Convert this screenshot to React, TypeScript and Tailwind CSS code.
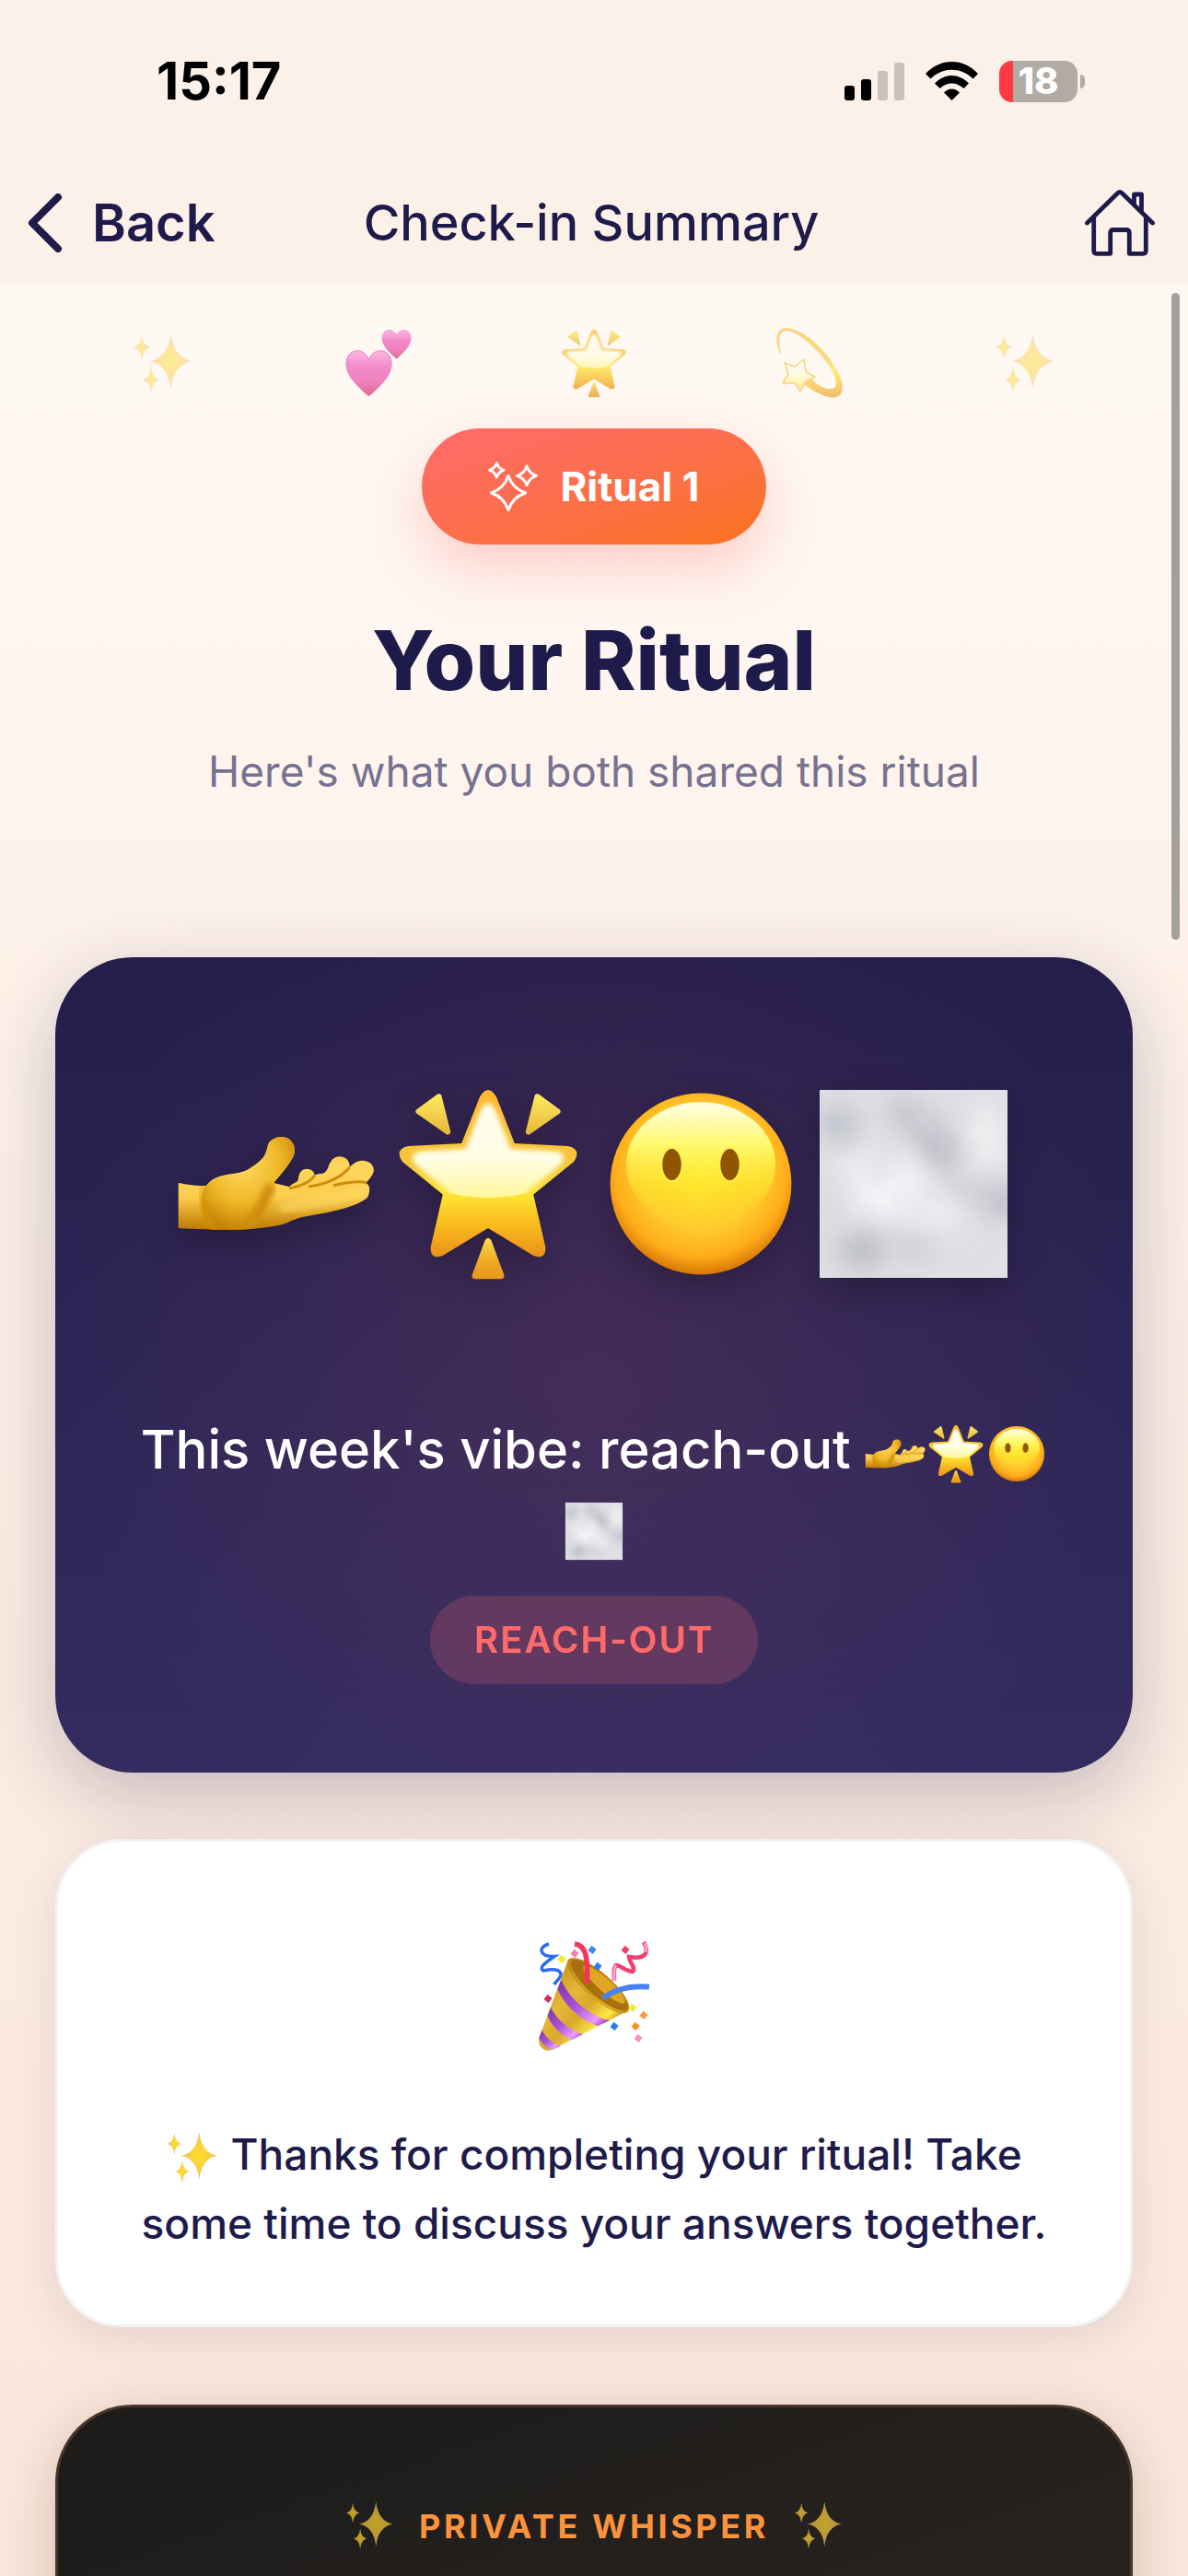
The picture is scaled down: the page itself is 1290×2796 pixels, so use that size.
import type { ReactNode } from 'react'

interface IconProps {
  className?: string
}

function star4(cx: number, cy: number, rx: number, ry: number, k = 0.12) {
  const ix = rx * k
  const iy = ry * k
  return `M${cx} ${cy - ry}Q${cx + ix} ${cy - iy} ${cx + rx} ${cy}Q${cx + ix} ${cy + iy} ${cx} ${cy + ry}Q${cx - ix} ${cy + iy} ${cx - rx} ${cy}Q${cx - ix} ${cy - iy} ${cx} ${cy - ry}Z`
}

const STAR =
  'M33 4.5Q36 -.5 39 4.5L45.6 21.3L65 22.3Q70 23.5 67 28L52.4 39.8L56.8 59Q57 63.5 52.5 62L36 52L19.5 62Q15 63.5 15.2 59L19.6 39.8L5 28Q2 23.5 7 22.3L26.4 21.3Z'

const HEART = 'M25.5 72C14 62 1 50 1 37C1 20 20 18 25.5 32C31 18 50 20 50 37C50 50 37 62 25.5 72Z'

const HAND =
  'M.9 35.6C5 36.5 8 36.7 10.9 36.7C13 34 15 33.5 17.6 32.8C21 32 23.5 32.3 25.9 30.9C29 29 31 27.5 32 25.9C33.5 23 33 21 34.5 20.3C36.5 18.4 40.5 18.6 42 20.8C43.6 23 43 25.5 42 27C40 30.5 37.5 33 35.4 35.7L41 37C43 35.2 44 35.8 44.3 34.2C44.6 31.5 46 30.6 47.3 30.6C49 30.6 50.2 31.6 50.2 32.9C51.5 32.2 52.8 32.5 53.7 32C55.2 31 55 29.5 56 28.1C57 26.5 58 26.1 59.3 26.1C61.5 26.2 63 27.6 62.9 30C64.5 28.4 65.8 27.6 67.6 27.6C70 27.7 71.8 29.2 71.6 31.4C71.2 33.2 69.6 34.6 68.9 35.7C70 36.5 70.2 37.4 70 38.8C69.8 40.2 69.4 41 68.7 41.4C66 43.2 64 44 61 44.8C55 46.6 50 47 45.4 48.1C42 49 40.5 50.3 37.6 50.9C32 52 26 52.6 20.4 52.6C13 52.6 7 52.4 .9 52Z'

// gradients shared by all the emoji drawings
function EmojiDefs() {
  return (
    <svg className="absolute h-0 w-0" aria-hidden="true">
      <defs>
        <linearGradient id="gold" x1="0" y1="0" x2="0" y2="1">
          <stop offset="0" stopColor="#ffb92e" />
          <stop offset="0.45" stopColor="#f5c63c" />
          <stop offset="0.62" stopColor="#fde736" />
          <stop offset="0.82" stopColor="#f8b81c" />
          <stop offset="1" stopColor="#e8921a" />
        </linearGradient>
        <linearGradient id="shine" x1="0" y1="0" x2="0" y2="1">
          <stop offset="0" stopColor="#fffdf0" />
          <stop offset="0.4" stopColor="#fffde2" />
          <stop offset="0.72" stopColor="#fff68e" />
          <stop offset="1" stopColor="#ffd728" />
        </linearGradient>
        <linearGradient id="ray" x1="0" y1="0" x2="0" y2="1">
          <stop offset="0" stopColor="#fbe85e" />
          <stop offset="1" stopColor="#e9b93a" />
        </linearGradient>
        <linearGradient id="tail" x1="0" y1="0" x2="0" y2="1">
          <stop offset="0" stopColor="#fce04e" />
          <stop offset="0.6" stopColor="#efa522" />
          <stop offset="1" stopColor="#e8981c" />
        </linearGradient>
        <radialGradient id="face" cx="0.5" cy="0.42" r="0.6">
          <stop offset="0" stopColor="#ffe82e" />
          <stop offset="0.55" stopColor="#ffcb2e" />
          <stop offset="0.8" stopColor="#ffad1a" />
          <stop offset="1" stopColor="#cf6a00" />
        </radialGradient>
        <linearGradient id="faceShine" x1="0" y1="0" x2="0" y2="1">
          <stop offset="0" stopColor="#fffde6" />
          <stop offset="0.35" stopColor="#fff86a" />
          <stop offset="0.7" stopColor="#ffe92a" stopOpacity="0.5" />
          <stop offset="1" stopColor="#ffd92a" stopOpacity="0" />
        </linearGradient>
        <linearGradient id="skin" x1="0" y1="0" x2="0" y2="1">
          <stop offset="0" stopColor="#efb11e" />
          <stop offset="0.3" stopColor="#ffd75e" />
          <stop offset="0.65" stopColor="#fbcd4c" />
          <stop offset="1" stopColor="#bd7800" />
        </linearGradient>
        <radialGradient id="palm" cx="0.45" cy="0.3" r="0.7">
          <stop offset="0" stopColor="#ffd862" />
          <stop offset="0.55" stopColor="#efb828" />
          <stop offset="1" stopColor="#c07c00" />
        </radialGradient>
        <linearGradient id="heart" x1="0" y1="0" x2="0" y2="1">
          <stop offset="0" stopColor="#f9b9e0" />
          <stop offset="0.35" stopColor="#f38bcb" />
          <stop offset="0.7" stopColor="#f07fbb" />
          <stop offset="1" stopColor="#d96a94" />
        </linearGradient>
        <radialGradient id="sparkle">
          <stop offset="0" stopColor="#ffe02a" />
          <stop offset="0.45" stopColor="#fbd03c" />
          <stop offset="1" stopColor="#f8b878" />
        </radialGradient>
        <linearGradient id="cone" x1="0" y1="0.35" x2="0.65" y2="1">
          <stop offset="0" stopColor="#c9961c" />
          <stop offset="0.3" stopColor="#e5b83a" />
          <stop offset="0.55" stopColor="#d9a82a" />
          <stop offset="0.8" stopColor="#ffe744" />
          <stop offset="1" stopColor="#a87410" />
        </linearGradient>
        <linearGradient id="stripe" x1="0" y1="0" x2="1" y2="1">
          <stop offset="0" stopColor="#7d34a8" />
          <stop offset="0.45" stopColor="#a651d6" />
          <stop offset="0.8" stopColor="#ee9bff" />
          <stop offset="1" stopColor="#6d1f86" />
        </linearGradient>
        <filter id="fogBlur" x="-50%" y="-50%" width="200%" height="200%">
          <feGaussianBlur stdDeviation="4.5" />
        </filter>
        <filter id="fogNoise" x="0" y="0" width="100%" height="100%">
          <feTurbulence type="fractalNoise" baseFrequency=".045" numOctaves="4" seed="7" />
          <feColorMatrix values="0 0 0 0 .7  0 0 0 0 .7  0 0 0 0 .75  2.4 0 0 0 -.95" />
        </filter>
        <filter id="soft" x="-20%" y="-20%" width="140%" height="140%">
          <feGaussianBlur stdDeviation="1" />
        </filter>
        <clipPath id="fogClip">
          <rect x="2" y="2" width="68" height="68" />
        </clipPath>
        <clipPath id="shineClip">
          <ellipse cx="36" cy="10" rx="42" ry="31" />
        </clipPath>
        <clipPath id="handClip">
          <path d={HAND} />
        </clipPath>
      </defs>
    </svg>
  )
}

function Sparkles({ className }: IconProps) {
  return (
    <svg viewBox="0 0 64 63" className={className} role="img" aria-label="sparkles">
      <g fill="url(#sparkle)">
        <path d={star4(40.5, 29, 23, 31)} />
        <path d={star4(9, 14, 9, 14)} />
        <path d={star4(19, 49, 9, 14)} />
      </g>
    </svg>
  )
}

function Hearts({ className }: IconProps) {
  return (
    <svg viewBox="0 0 72 72" className={className} role="img" aria-label="two hearts">
      <g fill="url(#heart)" stroke="#ee7cc0" strokeWidth="1">
        <path d={HEART} />
        <path d={HEART} transform="translate(39.5 -14) scale(.63)" />
      </g>
    </svg>
  )
}

function GlowingStar({ className }: IconProps) {
  return (
    <svg viewBox="0 0 72 72" className={className} role="img" aria-label="glowing star">
      <path d={STAR} fill="url(#gold)" />
      <g clipPath="url(#shineClip)">
        <path d={STAR} fill="url(#shine)" filter="url(#soft)" transform="translate(5.4 5.2) scale(.85)" />
      </g>
      <g fill="url(#ray)" stroke="url(#ray)" strokeWidth="2" strokeLinejoin="round">
        <path d="M18.2 4.4L10.8 9.8L21.4 17.2Z" />
        <path d="M53.8 4.4L61.2 9.8L50.6 17.2Z" />
      </g>
      <path d="M34.8 56.6Q36 54.6 37.2 56.6L41.8 69Q42 70.3 40.8 70.4L31.2 70.4Q30 70.3 30.2 69Z" fill="url(#tail)" />
    </svg>
  )
}

function Dizzy({ className }: IconProps) {
  return (
    <svg viewBox="0 0 74 76" className={className} role="img" aria-label="dizzy">
      <path
        d="M5 28C-2 12 1 0 12 0C30 1 54 22 67 46C79 68 71 78 58 75C46 72 34 64 30 60L37 53C45 62 56 69 64 65C70 58 60 42 50 30C36 14 20 2 11 3C3 4 3 14 6 28Z"
        fill="url(#gold)"
      />
      <path
        d="M31 34L33 47L43 53L33 58L27 69L21 60L8 60L14 50L10 38L21 42Z"
        fill="url(#shine)"
        stroke="#f0b93c"
        strokeWidth="1.5"
        strokeLinejoin="round"
      />
    </svg>
  )
}

function Hand({ className }: IconProps) {
  return (
    <svg viewBox="0 0 72 72" className={className} role="img" aria-label="palm up hand">
      <path d={HAND} fill="url(#skin)" />
      <g clipPath="url(#handClip)">
        <path
          d="M10.9 36.7C14 33 21 33 25.9 30.9C33 26 32 18 38.5 18.5C44 19 44 24 42 27.5C38 33 35 36 33.5 41C32 46 29 50 27 54L14 54C8 48 8.5 40 10.9 36.7Z"
          fill="url(#palm)"
        />
        <path d="M34.5 36.5C32 42 30 47 26 51" fill="none" stroke="#cf8f08" strokeWidth="4" filter="url(#soft)" />
        <path d="M10.5 36.5C8.5 41 9.5 48 14 52" fill="none" stroke="#d79a10" strokeWidth="1.6" filter="url(#soft)" />
        <path
          d="M41 37.6C46 36.6 49 35 50.2 32.9M48 37C55 36 60 33.5 62.9 30M57 36.6C62 35.4 66 34.8 69 35.6"
          fill="none"
          stroke="#cf8c0a"
          strokeWidth="1"
        />
        <path d="M38 45C48 43 60 42 69 38" fill="none" stroke="#ffda68" strokeWidth="4" opacity=".6" filter="url(#soft)" />
      </g>
    </svg>
  )
}

function NoMouthFace({ className }: IconProps) {
  return (
    <svg viewBox="0 0 72 72" className={className} role="img" aria-label="face without mouth">
      <circle cx="36" cy="36" r="32.8" fill="url(#face)" />
      <ellipse cx="36" cy="29" rx="27" ry="22.6" fill="url(#faceShine)" />
      <g fill="#8f5500" stroke="#ffef4a" strokeWidth=".6">
        <ellipse cx="25.5" cy="29" rx="3.7" ry="6" />
        <ellipse cx="46.5" cy="29" rx="3.7" ry="6" />
      </g>
    </svg>
  )
}

function Fog({ className }: IconProps) {
  return (
    <svg viewBox="0 0 72 72" className={className} role="img" aria-label="fog">
      <g clipPath="url(#fogClip)">
        <rect x="2" y="2" width="68" height="68" fill="#e0e1e5" />
        <g filter="url(#fogBlur)">
          <ellipse cx="9" cy="14" rx="8" ry="7" fill="#c0c2ca" />
          <ellipse cx="38" cy="14" rx="14" ry="6" fill="#bebfc8" transform="rotate(32 38 14)" />
          <ellipse cx="47" cy="24" rx="7" ry="6" fill="#b6b7c1" />
          <ellipse cx="66" cy="42" rx="8" ry="7" fill="#bdbec7" />
          <ellipse cx="55" cy="38" rx="9" ry="5" fill="#cdced5" />
          <ellipse cx="17" cy="60" rx="10" ry="8" fill="#c0c1c9" />
          <ellipse cx="37" cy="58" rx="7" ry="8" fill="#ced0d6" />
          <ellipse cx="24" cy="37" rx="16" ry="10" fill="#f8f8fa" />
          <ellipse cx="62" cy="20" rx="8" ry="12" fill="#f0f0f2" />
          <ellipse cx="44" cy="47" rx="12" ry="7" fill="#eeeef1" />
          <ellipse cx="6" cy="42" rx="5" ry="8" fill="#d8d9de" />
        </g>
        <rect x="2" y="2" width="68" height="68" filter="url(#fogNoise)" opacity=".55" />
      </g>
    </svg>
  )
}

const confetti = [
  { x: 25, y: 19, fill: '#f7ea2c' },
  { x: 39, y: 13, fill: '#f57fae' },
  { x: 58, y: 9, fill: '#3b86f2' },
  { x: 64, y: 27, fill: '#2f7df0' },
  { x: 94, y: 9, fill: '#ee3f6b' },
  { x: 10, y: 62, fill: '#cf2f55' },
  { x: 102, y: 72, fill: '#f3ea35' },
  { x: 114, y: 80, fill: '#fb9a3a' },
  { x: 105, y: 92, fill: '#f98f25' },
  { x: 82, y: 92, fill: '#2f7df0' },
  { x: 108, y: 105, fill: '#f990c3' },
]

function PartyPopper({ className }: IconProps) {
  return (
    <svg viewBox="0 0 120 120" className={className} role="img" aria-label="party popper">
      <path d="M32 20L0 106C-1 114 6 121 14 118L96 76Z" fill="url(#cone)" />
      <g fill="url(#stripe)">
        <path d="M24.3 42C32 60 52 80 77 86L64 92C46 86 28 70 20.5 52Z" />
        <path d="M13 72C20 86 34 97 48 101L36 107C24 102 14 92 9.5 81Z" />
        <path d="M3.5 96.5C8 105 15 111 24 113.5L15 118C9 116 3 111 .3 105Z" />
      </g>
      <ellipse cx="64.6" cy="48" rx="43" ry="14" transform="rotate(41 64.6 48)" fill="#c68d14" />
      <ellipse cx="65.5" cy="47.5" rx="40" ry="11.5" transform="rotate(41 65.5 47.5)" fill="#a8700c" />
      <ellipse cx="71" cy="47" rx="30" ry="7" transform="rotate(42 71 47)" fill="#e0a523" />
      <path d="M34 22C36 40 62 70 94 77C72 76 36 46 34 22Z" fill="#f0c13a" />
      <g fill="none">
        <path d="M11 3C-1 6 0 17 17 16.5C6 24 0 29 5 32C14 30 22 30 24 35C25 39 20 42 16.7 47" stroke="#2b6cf0" strokeWidth="3.5" />
        <path d="M39 3C52 4 53.5 20 52.5 46" stroke="#f5335f" strokeWidth="5.5" />
        <path d="M114 1C120 12 117 20 98 17C98 23 106 28 102 33C96 33 88 26 84 26C81 28 82 36 82 43" stroke="#f0406f" strokeWidth="4.5" />
        <path d="M82 43C82 36 81 28 84 26M115 2C117 6 117 9 117 12" stroke="#ff9fd0" strokeWidth="3" />
        <path d="M70 62C82 52 100 48 120 49.5" stroke="#4583f5" strokeWidth="6" />
      </g>
      {confetti.map((c) => (
        <rect
          key={`${c.x}-${c.y}`}
          x={c.x - 3}
          y={c.y - 3}
          width="6.5"
          height="6.5"
          fill={c.fill}
          transform={`rotate(38 ${c.x} ${c.y})`}
        />
      ))}
    </svg>
  )
}

function StatusBar() {
  return (
    <div className="flex items-center justify-between pt-[60px] pr-[112px] pl-[170px] text-black">
      <span className="text-[56px] leading-[56px] font-bold">15:17</span>
      <div className="flex items-center">
        <svg viewBox="0 0 65 41" className="h-[41px] w-[65px]" aria-label="signal">
          <rect x="0" y="25" width="11" height="16" rx="3" />
          <rect x="18" y="18" width="11" height="23" rx="3" />
          <rect x="36" y="9" width="11" height="32" rx="3" fill="#cbc1ba" />
          <rect x="54" y="0" width="11" height="41" rx="3" fill="#cbc1ba" />
        </svg>
        <svg viewBox="0 0 57 42" className="ml-[23px] h-[42px] w-[57px]" aria-label="wifi">
          <path d="M0 13C16 -4.3 41 -4.3 57 13L51.5 18.5C38.500 5.5 18.5 5.5 5.5 18.5Z" />
          <path d="M10 23.500C21 12 36 12 47 23.5L41.5 29C34 21.5 23 21.5 15.5 29Z" />
          <path d="M20 33.5C25 28 32 28 37 33.5L28.5 42Z" />
        </svg>
        <div className="ml-[23px] flex h-[45px] w-[85px] items-center justify-center rounded-[14px] bg-linear-to-r from-[#ff3b41] from-[15px] to-[#b2aaa4] to-[15px] text-[40px] leading-[48px] font-extrabold text-white">
          18
        </div>
        <div className="ml-[3px] h-[15px] w-[5px] rounded-r-full bg-[#b2aaa4]" />
      </div>
    </div>
  )
}

function Header() {
  return (
    <header className="grid grid-cols-[1fr_auto_1fr] items-center pt-[90px] pr-9 pb-[31px] pl-[30px] text-[#1e1b4b]">
      <button className="flex items-center gap-8 text-[56px] leading-[72px] font-semibold">
        <svg viewBox="0 0 38 64" className="h-16 w-[38px]" fill="none" stroke="currentColor" strokeWidth="8" strokeLinecap="round" strokeLinejoin="round">
          <path d="M33 4L5 32L33 60" />
        </svg>
        Back
      </button>
      <h1 className="text-[54px] leading-[72px] font-medium">Check-in Summary</h1>
      <button className="justify-self-end" aria-label="Home">
        <svg viewBox="0 0 76 72" className="h-[72px] w-[76px]" fill="none" stroke="currentColor" strokeWidth="4.8" strokeLinecap="round" strokeLinejoin="round">
          <path d="M2.5 36L35.5 3.7Q38 1.5 40.5 3.7L73.5 36" />
          <path d="M9.7 30V66Q9.7 69.3 13 69.3H27.7V47Q27.7 43.5 31.2 43.5H44.8Q48.3 43.5 48.3 47V69.3H63Q66.3 69.3 66.3 66V30" />
          <path d="M53.5 14V5H61.5V23" />
        </svg>
      </button>
    </header>
  )
}

function Hero() {
  return (
    <section className="flex flex-col items-center bg-linear-to-b from-[#fff9f4] to-[#fef4ee] pb-[34px]">
      <div className="grid w-full grid-cols-5 place-items-center px-[60px] pt-[46px]">
        <Sparkles className="h-[63px] w-16 opacity-45" />
        <Hearts className="h-[72px] w-[72px]" />
        <GlowingStar className="h-[78px] w-[78px] opacity-70" />
        <Dizzy className="h-[76px] w-[74px] opacity-60" />
        <Sparkles className="h-[63px] w-16 opacity-45" />
      </div>
      <div className="mt-8 flex h-[126px] items-center gap-6 rounded-full bg-linear-to-br from-[#ff6b6b] to-[#f97316] px-[72px] text-[44px] font-bold text-white shadow-[0_24px_60px_rgba(255,107,107,0.3)]">
        <svg viewBox="0 0 54 54" className="h-[54px] w-[54px]" fill="none" stroke="currentColor" strokeWidth="3" strokeLinejoin="round" aria-hidden="true">
          <path d={star4(9.3, 9.3, 7.6, 7.6, 0.25)} />
          <path d={star4(42, 15.3, 10.3, 10.3, 0.25)} />
          <path d={star4(22, 34, 18.6, 18.6, 0.25)} />
        </svg>
        Ritual 1
      </div>
      <h2 className="mt-[66px] text-[90px] leading-[120px] font-extrabold text-[#1e1b4b]">Your Ritual</h2>
      <p className="mt-6 text-[46px] leading-[72px] text-[#78718f]">Here's what you both shared this ritual</p>
    </section>
  )
}

interface CardProps {
  className: string
  children: ReactNode
}

function Card({ className, children }: CardProps) {
  return <section className={`mx-[60px] flex flex-col items-center text-center ${className}`}>{children}</section>
}

export default function App() {
  return (
    <div className="flex h-screen flex-col overflow-hidden bg-[#fcf1e8] font-['Inter',sans-serif]">
      <EmojiDefs />
      <StatusBar />
      <Header />
      <main className="relative min-h-0 flex-1 overflow-hidden bg-linear-to-b from-[#fff7ef] to-[#fae6db]">
        <Hero />
        <div className="absolute top-[9px] right-[9px] h-[702px] w-[9px] rounded-full bg-[#a39f9b]" />

        <Card className="mt-[132px] rounded-[84px] bg-[radial-gradient(circle_at_center,rgba(255,107,107,0.11),transparent_80%),linear-gradient(#251e4b,#342c60)] px-[72px] pt-[138px] pb-24 shadow-[0_24px_84px_rgba(30,27,75,0.25)]">
          <div className="flex gap-[15px] drop-shadow-[0_12px_18px_rgba(0,0,0,0.25)]">
            <Hand className="h-[216px] w-[216px]" />
            <GlowingStar className="h-[216px] w-[216px]" />
            <NoMouthFace className="h-[216px] w-[216px]" />
            <Fog className="h-[216px] w-[216px]" />
          </div>
          <p className="mt-[138px] text-[58px] leading-[84px] font-medium text-white">
            This week's vibe: reach-out <Hand className="inline h-[66px] w-[66px]" />
            <GlowingStar className="inline h-[66px] w-[66px]" />
            <NoMouthFace className="inline h-[66px] w-[66px]" />
            <Fog className="inline h-[66px] w-[66px]" />
          </p>
          <span className="mt-[33px] rounded-full bg-[#ff6b6b]/20 px-12 py-6 text-[40px] leading-[48px] font-semibold tracking-wider text-[#ff6b6b]">
            REACH-OUT
          </span>
        </Card>

        <Card className="mt-[72px] rounded-[72px] border-3 border-[#f3f2f4] bg-white px-[60px] pt-[108px] pb-[72px] shadow-[0_12px_48px_rgba(30,27,75,0.1)]">
          <PartyPopper className="h-[120px] w-[120px]" />
          <p className="mt-[74px] text-[46px] leading-[75px] font-medium text-[#1e1b4b]">
            <Sparkles className="inline h-[54px] w-[58px]" /> Thanks for completing your ritual! Take some time to discuss your answers together.
          </p>
        </Card>

        <Card className="mt-[84px] rounded-t-[84px] border-3 border-b-0 border-[#4a3529] bg-linear-to-br from-[#1c1b19] to-[#2b2624] px-[72px] pt-[103px] pb-[240px] shadow-[0_12px_60px_rgba(60,30,10,0.2)]">
          <div className="flex items-center gap-[28px]">
            <Sparkles className="h-[51px] w-[51px] opacity-70" />
            <h3 className="text-[36px] leading-[48px] font-bold tracking-widest text-[#fb923c]">PRIVATE WHISPER</h3>
            <Sparkles className="h-[51px] w-[51px] opacity-70" />
          </div>
        </Card>
      </main>
    </div>
  )
}
